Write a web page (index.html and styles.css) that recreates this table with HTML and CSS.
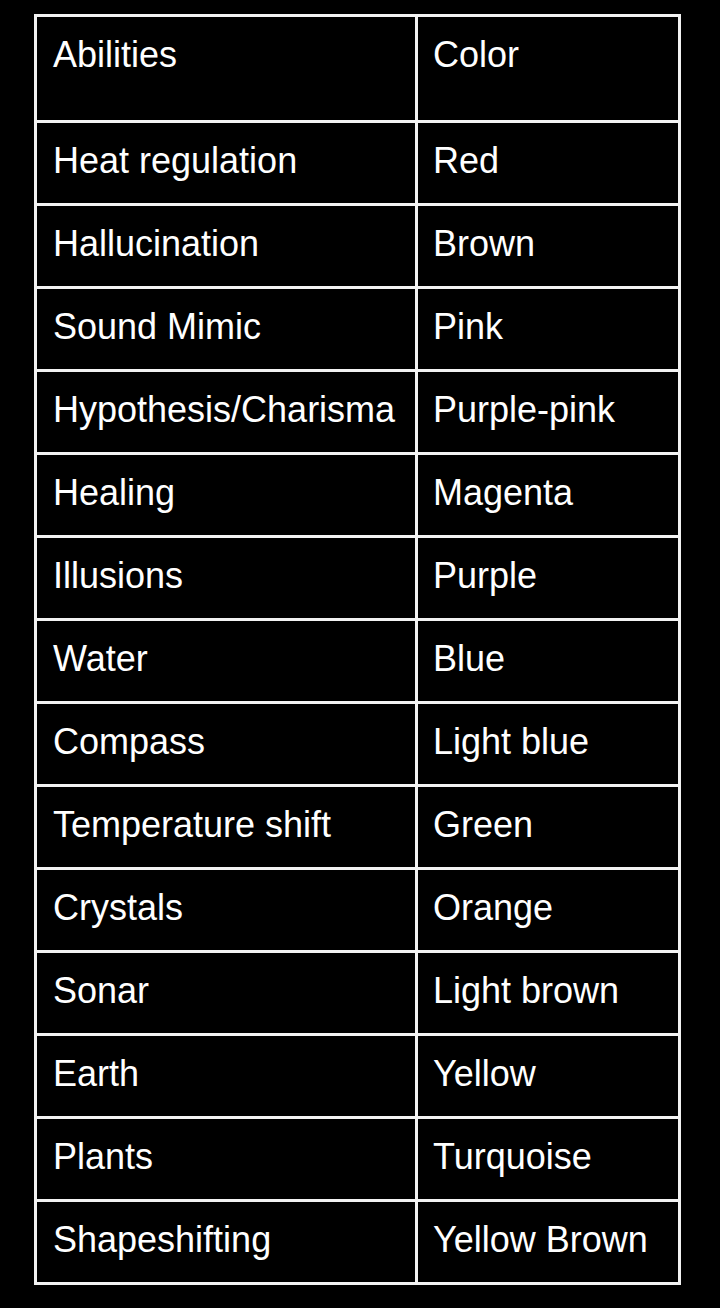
FILE: index.html
```html
<!DOCTYPE html>
<html lang="en">
<head>
  <meta charset="UTF-8">
  <meta name="viewport" content="width=device-width, initial-scale=1.0">
  <title>Abilities and Colors</title>
  <link rel="stylesheet" href="styles.css">
</head>
<body>
  <table class="abilities">
    <thead>
      <tr>
        <th>Abilities</th>
        <th>Color</th>
      </tr>
    </thead>
    <tbody>
      <tr><td>Heat regulation</td><td>Red</td></tr>
      <tr><td>Hallucination</td><td>Brown</td></tr>
      <tr><td>Sound Mimic</td><td>Pink</td></tr>
      <tr><td>Hypothesis/Charisma</td><td>Purple-pink</td></tr>
      <tr><td>Healing</td><td>Magenta</td></tr>
      <tr><td>Illusions</td><td>Purple</td></tr>
      <tr><td>Water</td><td>Blue</td></tr>
      <tr><td>Compass</td><td>Light blue</td></tr>
      <tr><td>Temperature shift</td><td>Green</td></tr>
      <tr><td>Crystals</td><td>Orange</td></tr>
      <tr><td>Sonar</td><td>Light brown</td></tr>
      <tr><td>Earth</td><td>Yellow</td></tr>
      <tr><td>Plants</td><td>Turquoise</td></tr>
      <tr><td>Shapeshifting</td><td>Yellow Brown</td></tr>
    </tbody>
  </table>
</body>
</html>
```

FILE: styles.css
```css
html {
  background-color: #000;
}
body {
  margin: 14px 0 0 34px;
  font-family: "Liberation Sans", Arial, sans-serif;
  color: #fff;
}
.abilities {
  border-collapse: separate;
  border-spacing: 0;
  border-top: 3px solid #f2f2f2;
  border-left: 3px solid #f2f2f2;
  table-layout: fixed;
  width: 647px;
}
.abilities th,
.abilities td {
  border-right: 3px solid #f2f2f2;
  border-bottom: 3px solid #f2f2f2;
  font-size: 36px;
  font-weight: normal;
  text-align: left;
  padding: 0 8px 0 16px;
  white-space: nowrap;
  box-sizing: border-box;
}
.abilities th:first-child,
.abilities td:first-child {
  width: 381px;
}
.abilities th {
  height: 106px;
  vertical-align: top;
  padding-top: 17px;
}
.abilities td {
  height: 83px;
  vertical-align: middle;
  padding-bottom: 4px;
}
.abilities td:last-child,
.abilities th:last-child {
  padding-left: 15px;
}
```
